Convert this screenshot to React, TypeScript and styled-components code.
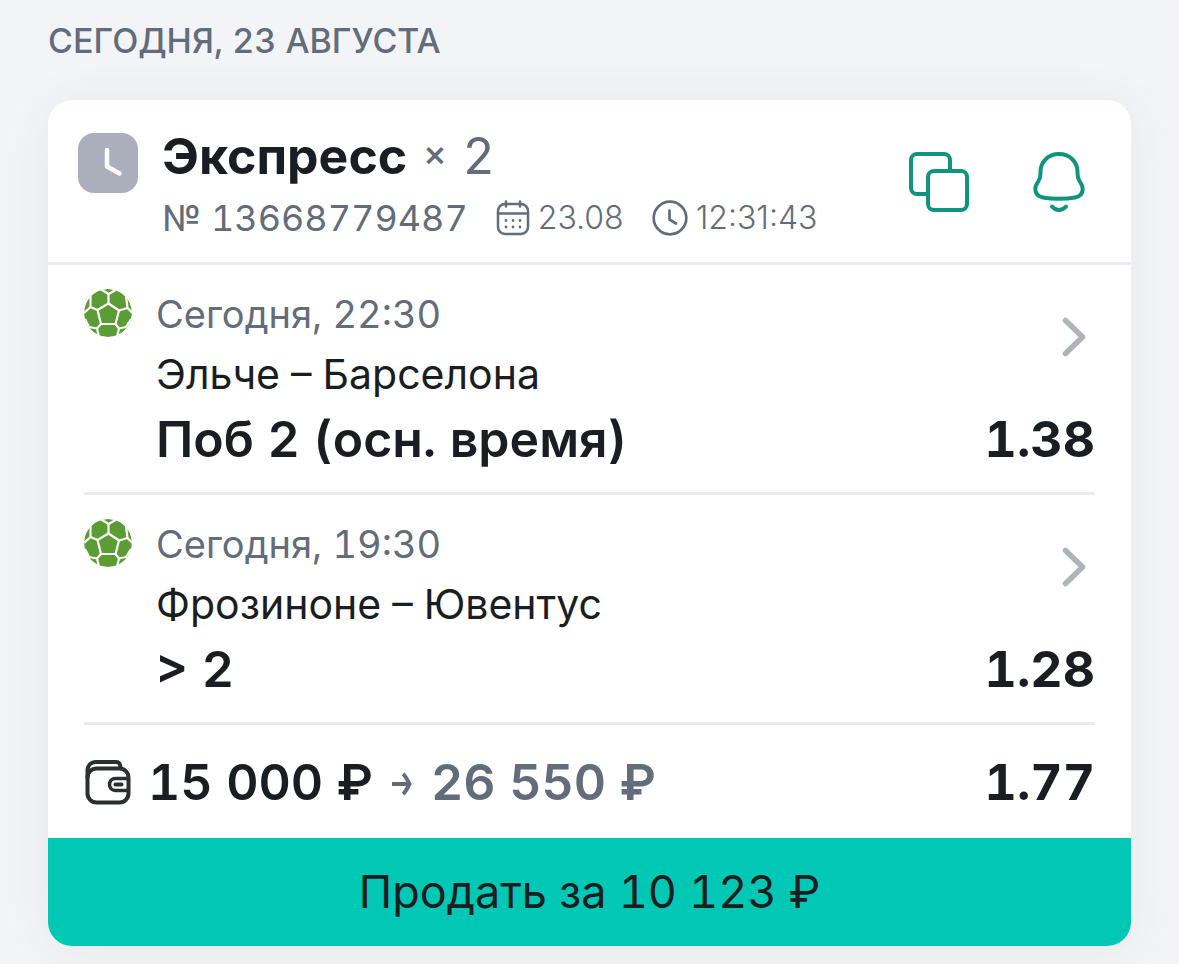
import React from "react";
import styled, { createGlobalStyle } from "styled-components";

const ink = "#1a1d21";
const slate = "#626c7a";
const line = "#ebecee";
const green = "#10947f";

const GlobalStyle = createGlobalStyle`
  * { box-sizing: border-box; }
  body {
    margin: 0;
    background: #f3f4f7;
    color: ${ink};
    font-family: Inter, "Noto Sans", sans-serif;
    font-variant-numeric: tabular-nums;
  }
  h1, h2, h3, p, ul { margin: 0; padding: 0; font-weight: 400; }
  button { border: 0; padding: 0; background: none; font: inherit; color: inherit; cursor: pointer; }
`;

const Page = styled.main`
  padding: 11px 48px 18px;
`;

const DayTitle = styled.h1`
  && { font-weight: 500; }
  margin-bottom: 29px;
  color: ${slate};
  font-size: 34px;
  line-height: 60px;
  text-transform: uppercase;
`;

const Card = styled.article`
  overflow: hidden;
  border-radius: 24px;
  background: #fff;
  box-shadow: 0 4px 48px rgba(60, 72, 110, 0.07);
`;

const Header = styled.header`
  display: flex;
  align-items: center;
  gap: 24px;
  padding: 26px 42px 12px 30px;
  border-bottom: 3px solid ${line};
`;

const Status = styled.span`
  display: flex;
  align-self: flex-start;
  padding-top: 7px;
`;

const Summary = styled.div`
  flex: 1;
`;

const Title = styled.h2`
  display: flex;
  align-items: center;
  gap: 16px;
  font-size: 50px;
  line-height: 60px;
`;

const Kind = styled.strong`
  font-weight: 700;
`;

const Times = styled.span`
  color: ${slate};
  font-size: 36px;
  font-weight: 500;
  line-height: 52px;
  padding-bottom: 6px;
`;

const Count = styled.span`
  color: ${slate};
`;

const Meta = styled.div`
  display: flex;
  align-items: center;
  gap: 28px;
  color: ${slate};
  font-size: 36px;
  line-height: 64px;
`;

const MetaItem = styled.span`
  display: flex;
  align-items: center;
  gap: 8px;
`;

const Stamp = styled(MetaItem)`
  font-size: 32px;
  font-weight: 300;
  font-variant-numeric: normal;
`;

const Actions = styled.div`
  display: flex;
  gap: 59px;
  padding-bottom: 12px;
`;

const IconButton = styled.button`
  display: flex;
`;

const Events = styled.ul`
  padding: 0 36px;
  list-style: none;
`;

const Event = styled.li`
  display: grid;
  grid-template-columns: 48px 1fr auto;
  column-gap: 24px;
  padding: 19px 0 18px;
  border-bottom: 3px solid ${line};
`;

const Sport = styled.span`
  display: flex;
  padding-top: 5px;
`;

const Match = styled.div`
  font-size: 41px;
  line-height: 60px;
`;

const When = styled.p`
  color: ${slate};
  font-size: 38px;
`;

const Side = styled.div`
  display: flex;
  flex-direction: column;
  justify-content: space-between;
  align-items: flex-end;
  padding-top: 33px;
`;

const Chevron = styled.button`
  display: flex;
  margin-right: 9px;
`;

const Pick = styled.h3`
  && { font-weight: 600; }
  font-size: 50px;
  line-height: 70px;
`;

const Odds = styled.strong`
  font-size: 50px;
  font-weight: 700;
  line-height: 70px;
`;

const Totals = styled.div`
  display: flex;
  align-items: center;
  gap: 17px;
  padding: 22px 36px 21px;
`;

const Money = styled.span<{ $muted?: boolean }>`
  color: ${(p) => (p.$muted ? slate : ink)};
  font-size: 50px;
  font-weight: 600;
  line-height: 70px;
`;

const TotalOdds = styled(Odds)`
  margin-left: auto;
`;

const SellButton = styled.button`
  && { font-variant-numeric: tabular-nums; }
  display: block;
  width: 100%;
  background: #00c8b4;
  font-size: 45px;
  line-height: 108px;
  text-align: center;
`;

const StatusIcon = () => (
  <svg width="60" height="60" viewBox="0 0 60 60" fill="none" aria-hidden="true">
    <rect width="60" height="60" rx="16" fill="#abafbc" />
    <path d="M29 17v16.500l12.500 7" stroke="#fff" strokeWidth="4.500" strokeLinecap="round" strokeLinejoin="round" />
  </svg>
);

const CalendarIcon = () => (
  <svg width="34" height="36" viewBox="0 0 34 36" fill="none" stroke="currentColor" strokeWidth="2.500" strokeLinecap="round" aria-hidden="true">
    <rect x="2" y="4" width="30" height="30" rx="7" />
    <path d="M2 13.500h30M10 1.500v5M24 1.500v5" />
    <path d="M10 20.500h.01M17 20.500h.01M24 20.500h.01M10 27h.01M17 27h.01M24 27h.01" strokeWidth="2.800" />
  </svg>
);

const ClockIcon = () => (
  <svg width="36" height="36" viewBox="0 0 36 36" fill="none" stroke="currentColor" strokeWidth="2.700" strokeLinecap="round" strokeLinejoin="round" aria-hidden="true">
    <circle cx="18" cy="18" r="16.300" />
    <path d="M17.500 10.500v9l6.500 4" />
  </svg>
);

const CopyIcon = () => (
  <svg width="62" height="62" viewBox="0 0 62 62" fill="none" stroke={green} strokeWidth="4" strokeLinejoin="round" aria-hidden="true">
    <path d="M19 43H9a6 6 0 0 1-6-6V9a6 6 0 0 1 6-6h27a6 6 0 0 1 6 6v10" />
    <rect x="20" y="20" width="39" height="39" rx="6" />
  </svg>
);

const BellIcon = () => (
  <svg width="60" height="62" viewBox="0 0 60 62" fill="none" stroke={green} strokeWidth="4" strokeLinecap="round" strokeLinejoin="round" aria-hidden="true">
    <path d="M30 3C19 3 11.500 11 11.500 21c0 5 .2 5.500-2 9C7.500 33 6.300 35 6.300 38c0 4.500 3 7.500 7.700 8.500 5 1 10 1.300 16 1.300s11-.3 16-1.300c4.700-1 7.700-4 7.700-8.500 0-3-1.200-5-3.200-8-2.200-3.500-2-4-2-9C48.500 11 41 3 30 3z" />
    <path d="M23 55.500c4 4.700 10 4.700 14 0" />
  </svg>
);

const BallIcon = () => (
  <svg width="48" height="48" viewBox="0 0 48 48" aria-hidden="true">
    <clipPath id="ball"><circle cx="24" cy="24" r="24" /></clipPath>
    <g clipPath="url(#ball)">
      <circle cx="24" cy="24" r="24" fill="#5c9c35" />
      <g fill="none" stroke="#fff" strokeWidth="2.200" strokeLinejoin="round">
        <path d="M24.500 14.500L35 21.500 31.500 35H17L13.500 21z" />
        <path d="M24.500 14.500V5M35 21.500l8.500-2.500M31.500 35l3.500 4.500M17 35l-4 4.500M13.500 21L6.500 18" />
        <path d="M24.500 5l-8-5M24.500 5l9-5M43.500 19l-1.500-12M43.500 19l5 5M6.500 18V6M6.500 18L0 24" />
        <path d="M35 39.500l7-1.500 5-8M35 39.500L33 48M13 39.500l2 8.500M13 39.500L5 38l-4-8" />
      </g>
    </g>
  </svg>
);

const ChevronIcon = () => (
  <svg width="24" height="40" viewBox="0 0 24 40" fill="none" stroke="#b0b4b8" strokeWidth="5.500" strokeLinecap="round" strokeLinejoin="round" aria-hidden="true">
    <path d="M3.500 3.500L20.500 20 3.500 36.500" />
  </svg>
);

const WalletIcon = () => (
  <svg width="47" height="46" viewBox="0 0 47 46" fill="none" stroke="#2c2f32" strokeWidth="4" strokeLinejoin="round" aria-hidden="true">
    <rect x="3.500" y="9.500" width="41" height="34" rx="9" />
    <path d="M3.500 19V12C3.500 6.500 7 3 12 3h20c3.500 0 4.500 2 4.500 6.500" />
    <path d="M44.500 19.500H31.500c-8 0-8 12 0 12h13" strokeWidth="3.500" />
    <path d="M31.500 25.500h6" strokeLinecap="round" />
  </svg>
);

const ArrowIcon = () => (
  <svg width="24" height="28" viewBox="0 0 24 28" fill="none" stroke={slate} strokeWidth="4" role="img" aria-label="возможный выигрыш">
    <path d="M2 16h17M13 6c2 1.500 4.500 6 6.500 10-2 4-4.500 8.500-6.500 10" />
  </svg>
);

const events = [
  { when: "Сегодня, 22:30", match: "Эльче – Барселона", pick: "Поб 2 (осн. время)", odds: "1.38" },
  { when: "Сегодня, 19:30", match: "Фрозиноне – Ювентус", pick: "> 2", odds: "1.28" },
];

export default function App() {
  return (
    <>
      <GlobalStyle />
      <Page>
        <DayTitle>Сегодня, 23 августа</DayTitle>
        <Card>
          <Header>
            <Status><StatusIcon /></Status>
            <Summary>
              <Title>
                <Kind>Экспресс</Kind>
                <Times>×</Times>
                <Count>2</Count>
              </Title>
              <Meta>
                <MetaItem>№ 13668779487</MetaItem>
                <Stamp><CalendarIcon />23.08</Stamp>
                <Stamp><ClockIcon />12:31:43</Stamp>
              </Meta>
            </Summary>
            <Actions>
              <IconButton type="button" aria-label="Скопировать"><CopyIcon /></IconButton>
              <IconButton type="button" aria-label="Уведомления"><BellIcon /></IconButton>
            </Actions>
          </Header>
          <Events>
            {events.map((e) => (
              <Event key={e.match}>
                <Sport><BallIcon /></Sport>
                <Match>
                  <When>{e.when}</When>
                  <p>{e.match}</p>
                  <Pick>{e.pick}</Pick>
                </Match>
                <Side>
                  <Chevron type="button" aria-label="Открыть событие"><ChevronIcon /></Chevron>
                  <Odds>{e.odds}</Odds>
                </Side>
              </Event>
            ))}
          </Events>
          <Totals>
            <WalletIcon />
            <Money>15 000 ₽</Money>
            <ArrowIcon />
            <Money $muted>26 550 ₽</Money>
            <TotalOdds>1.77</TotalOdds>
          </Totals>
          <SellButton type="button">Продать за 10 123 ₽</SellButton>
        </Card>
      </Page>
    </>
  );
}
